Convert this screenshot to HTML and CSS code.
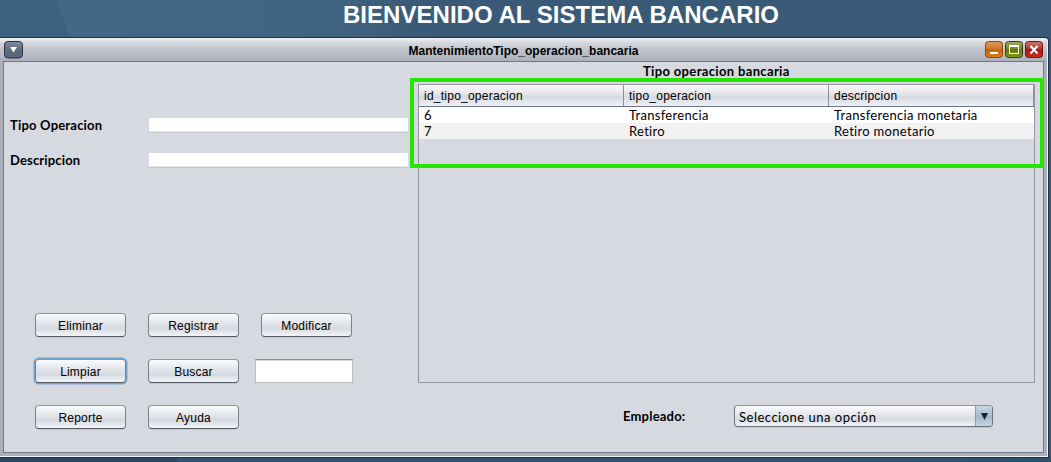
FILE: index.html
```html
<!DOCTYPE html>
<html lang="es">
<head>
<meta charset="utf-8">
<title>Sistema Bancario</title>
<link rel="stylesheet" href="styles.css">
</head>
<body>
<div class="desktop">
  <h1 class="banner">BIENVENIDO AL SISTEMA BANCARIO</h1>
  <div class="window">
    <div class="titlebar">
      <svg class="menu-button" width="19" height="18" viewBox="0 0 19 18">
        <defs><linearGradient id="menu" x2="0" y2="1"><stop offset="0" stop-color="#858da0"/><stop offset=".5" stop-color="#606b80"/><stop offset="1" stop-color="#56637a"/></linearGradient></defs>
        <rect x=".5" y=".5" width="18" height="16.5" rx="3.5" fill="url(#menu)" stroke="#2b3045"/>
        <path d="M6 6h7L9.5 11.5z" fill="#fff"/>
      </svg>
      <span class="title">MantenimientoTipo_operacion_bancaria</span>
      <div class="window-buttons">
        <svg width="18" height="18" viewBox="0 0 18 18">
          <defs><linearGradient id="min" x2="0" y2="1"><stop offset="0" stop-color="#dd9b5c"/><stop offset=".48" stop-color="#cf7625"/><stop offset=".5" stop-color="#c66408"/><stop offset="1" stop-color="#dc7d20"/></linearGradient></defs>
          <rect x=".5" y=".5" width="17" height="16" rx="3" fill="url(#min)" stroke="#91440b"/>
          <path d="M5 11h8v2H5z" fill="#fff"/>
        </svg>
        <svg width="18" height="18" viewBox="0 0 18 18">
          <defs><linearGradient id="max" x2="0" y2="1"><stop offset="0" stop-color="#a0ae65"/><stop offset=".48" stop-color="#728528"/><stop offset=".5" stop-color="#627709"/><stop offset="1" stop-color="#859622"/></linearGradient></defs>
          <rect x=".5" y=".5" width="17" height="16" rx="3" fill="url(#max)" stroke="#334015"/>
          <path d="M4.500 5.500h9v7h-9zM4 4.500h10" fill="none" stroke="#fff"/>
        </svg>
        <svg width="18" height="18" viewBox="0 0 18 18">
          <defs><linearGradient id="close" x2="0" y2="1"><stop offset="0" stop-color="#c87870"/><stop offset=".48" stop-color="#b33a32"/><stop offset=".5" stop-color="#a71912"/><stop offset="1" stop-color="#c62d20"/></linearGradient></defs>
          <rect x=".5" y=".5" width="17" height="16" rx="3" fill="url(#close)" stroke="#721313"/>
          <path d="M5.500 5l7 7.500M12.500 5l-7 7.500" stroke="#fff" stroke-width="2"/>
        </svg>
      </div>
    </div>
    <div class="content">
      <div class="form">
        <div class="field"><span class="label tipo">Tipo Operacion</span><input class="line-input"></div>
        <div class="field"><span class="label desc">Descripcion</span><input class="line-input"></div>
        <div class="actions">
          <button class="btn">Eliminar</button>
          <button class="btn">Registrar</button>
          <button class="btn">Modificar</button>
          <button class="btn focused">Limpiar</button>
          <button class="btn">Buscar</button>
          <input class="search">
          <button class="btn">Reporte</button>
          <button class="btn">Ayuda</button>
        </div>
      </div>
      <div class="data">
        <div class="data-title"><span>Tipo operacion bancaria</span></div>
        <div class="table">
          <div class="row head"><span>id_tipo_operacion</span><span>tipo_operacion</span><span>descripcion</span></div>
          <div class="row"><span>6</span><span>Transferencia</span><span>Transferencia monetaria</span></div>
          <div class="row alt"><span>7</span><span>Retiro</span><span>Retiro monetario</span></div>
        </div>
        <div class="employee">
          <span class="label empleado">Empleado:</span>
          <div class="combo"><span class="combo-text">Seleccione una opción</span><span class="arrow"><svg width="7" height="7" viewBox="0 0 7 7"><path d="M0 0h7L3.500 7z" fill="#17202c"/></svg></span></div>
        </div>
        <div class="highlight"></div>
      </div>
    </div>
  </div>
</div>
</body>
</html>
```
FILE: styles.css
```css
* { box-sizing: border-box; }
body { margin: 0; font-family: "Liberation Sans", Arial, sans-serif; font-size: 12px; color: #000; }
.desktop {
  width: 1051px; height: 462px; overflow: hidden;
  background:
    linear-gradient(90deg, #26475f 0 176px, #305470 178px 800px, #2b506b) 0 457px / 1051px 5px no-repeat,
    linear-gradient(70deg, #3c6180 0 65px, transparent 66px) 0 0 / 1051px 37px no-repeat,
    linear-gradient(90deg, #426888 60px, #40637f 340px, #3a5b78 410px, #395976 1051px);
}
.banner {
  margin: 0; height: 37px; padding-left: 343px; line-height: 29px;
  color: #fff; font-size: 24px; font-weight: bold; letter-spacing: .03px; white-space: nowrap;
}
.window {
  width: 1049px; height: 421px; padding: 0 4px 4px 3px;
  border: 1px solid #252e3c; border-left: 0; border-radius: 0 4px 0 0;
  background: linear-gradient(#f1f1f4 0, #d5d7de 5px, #c2c5cd 11px, #acb0ba 23px, #abb1bc);
  box-shadow: inset -1px -1px #f0f2f5;
}
.titlebar { height: 23px; display: grid; grid-template-columns: 120px 1fr 120px; padding: 3px 1px 0; }
.menu-button { display: block; }
.title { text-align: center; font-weight: bold; line-height: 20px; white-space: nowrap; }
.window-buttons { display: flex; justify-content: flex-end; gap: 2px; }
.content {
  display: grid; grid-template-columns: 406px 1fr; height: 392px;
  border: 1px solid #70788a; background: #d6d9e0;
}
.form { padding: 55px 0 0 6px; }
.field { display: flex; height: 20px; margin-bottom: 15px; }
.label, .data-title { font-family: Lato, sans-serif; font-weight: bold; font-size: 13px; white-space: nowrap; }
.field .label { width: 137px; line-height: 16px; }
.tipo { letter-spacing: .2px; }
.desc { letter-spacing: .15px; }
.line-input {
  width: 263px; height: 16px; padding: 0; border: solid #d6d9e0; border-width: 1px 2px;
  border-bottom: 1px solid #c8c9cb; background: #fff; background-clip: padding-box;
  box-shadow: inset 0 -1px #e8e9ea;
}
.actions {
  display: grid; grid-template: repeat(3, 24px) / repeat(3, 91px);
  gap: 22px; margin: 141px 0 0 25px;
}
.btn {
  padding: 1px 0 0; border: 1px solid #777a80; border-color: #92959d #7b7f87 #555961;
  border-radius: 4px; font: 12px "Liberation Sans", Arial, sans-serif; letter-spacing: .2px;
  background: linear-gradient(#fbfbfc, #e4e6ea 40%, #d6d9df 65%, #f3f5fa);
  box-shadow: 0 1px #c4c8d0;
}
.focused { box-shadow: 0 0 0 1.500px #73a4d1; }
.search {
  width: 98px; height: 24px; margin-left: -6px; background: #fff;
  border: 1px solid #bbbcc0; border-top-color: #8c8d92; box-shadow: inset 0 1px #d9d9dc;
}
.data { position: relative; }
.data-title { height: 22px; padding-left: 233px; line-height: 18px; letter-spacing: .35px; }
.table { width: 617px; height: 299px; margin-left: 8px; border: 1px solid #9297a1; }
.row { display: grid; grid-template-columns: 205px 205px 205px; height: 16px; background: #fff; font-family: Lato, sans-serif; font-size: 13px; line-height: 17px; letter-spacing: .3px; }
.row span { padding-left: 5px; white-space: nowrap; }
.head {
  height: 22px; border-bottom: 1px solid #6c7482; font: 12px/23px "Liberation Sans", Arial, sans-serif; letter-spacing: .24px;
  background: linear-gradient(#fafafc, #e2e4e8 45%, #d6d9df 55%, #edf0f6);
}
.head span { height: 21px; border-right: 1px solid #8b9099; }
.alt { background: #f2f2f2; }
.employee { display: flex; padding: 22px 0 0 213px; }
.empleado { width: 111px; line-height: 23px; letter-spacing: .2px; }
.combo {
  display: flex; width: 259px; height: 22px; border: 1px solid #70747c; border-top-color: #90949c; border-radius: 4px;
  background: linear-gradient(#fafafc, #e4e6ea 45%, #d6d9df 65%, #f1f4f9); box-shadow: 0 1px #c0c4cd; overflow: hidden;
}
.combo-text { flex: 1; padding-left: 4px; font: 13px/22px Lato, sans-serif; letter-spacing: .5px; white-space: nowrap; }
.arrow { width: 17px; display: flex; align-items: center; justify-content: center; border-left: 1px solid #7f9db3; background: linear-gradient(#c8d8e3, #a3bacb 55%, #bfd6e6); }
/* Marker frame laid over the table rows */
.highlight { position: absolute; left: 0; top: 16px; width: 634px; height: 90px; border: 4px solid #27e500; }
```
